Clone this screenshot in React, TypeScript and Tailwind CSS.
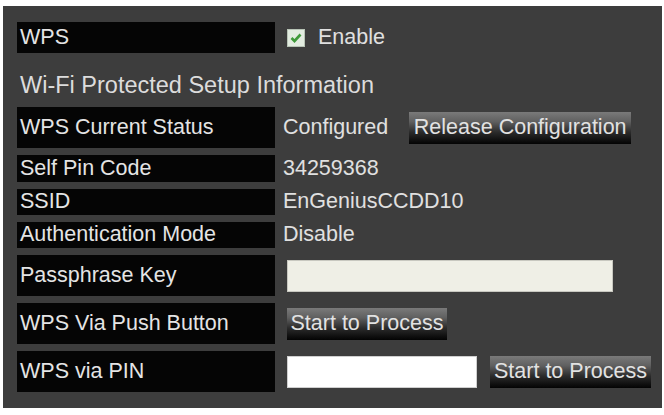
import React from 'react';

const font = { fontFamily: '"Liberation Sans", Arial, sans-serif' };

function Label({ text, h }: { text: string; h: string }) {
  return (
    <div
      className={`w-[258px] ${h} bg-[#050505] pl-[3px] flex items-center text-[21.5px] leading-none text-[#e4e4e4] shrink-0`}
    >
      {text}
    </div>
  );
}

function GlossButton({ text, w }: { text: string; w: string }) {
  return (
    <button
      className={`${w} h-[32px] bg-[linear-gradient(to_bottom,#7a7a7a_0%,#606060_30%,#2c2c2c_62%,#030303_100%)] text-[21.5px] leading-none text-[#e2e2e2] flex items-center justify-center shrink-0`}
    >
      {text}
    </button>
  );
}

export default function App() {
  return (
    <div className="w-[664px] h-[415px] bg-white pt-[6px] pl-[3px]" style={font}>
      <div className="w-[659px] h-[402px] bg-[#3d3d3d] pt-[16px] pl-[14px]">
        <div className="flex items-center h-[31px]">
          <Label text="WPS" h="h-[31px]" />
          <div className="ml-[12px] w-[18px] h-[18px] bg-[#e2ece0] border border-[#b8c4b6] flex items-center justify-center">
            <svg width="12" height="10" viewBox="0 0 12 10">
              <path d="M1.5 5 L4.5 8 L10.5 1.5" stroke="#3f9a3a" strokeWidth="2.6" fill="none" />
            </svg>
          </div>
          <span className="ml-[13px] text-[21.5px] leading-none text-[#e0e0e0]">Enable</span>
        </div>

        <div className="pt-[18px] pb-[8px] pl-[3px] text-[23.5px] leading-[28px] text-[#dcdcdc]">
          Wi-Fi Protected Setup Information
        </div>

        <div className="flex flex-col gap-[7px]">
          <div className="flex items-center">
            <Label text="WPS Current Status" h="h-[41px]" />
            <span className="ml-[8px] text-[21.5px] leading-none text-[#e0e0e0]">Configured</span>
            <div className="ml-[21px]">
              <GlossButton text="Release Configuration" w="w-[222px]" />
            </div>
          </div>

          <div className="flex items-center">
            <Label text="Self Pin Code" h="h-[27px]" />
            <span className="ml-[8px] text-[21.5px] leading-none text-[#e0e0e0]">34259368</span>
          </div>

          <div className="flex items-center">
            <Label text="SSID" h="h-[26px]" />
            <span className="ml-[8px] text-[21.5px] leading-none text-[#e0e0e0]">EnGeniusCCDD10</span>
          </div>

          <div className="flex items-center">
            <Label text="Authentication Mode" h="h-[26px]" />
            <span className="ml-[8px] text-[21.5px] leading-none text-[#e0e0e0]">Disable</span>
          </div>

          <div className="flex items-center">
            <Label text="Passphrase Key" h="h-[41px]" />
            <div className="ml-[12px] w-[326px] h-[32px] bg-[#efefe6] border border-[#c8c8c0]" />
          </div>

          <div className="flex items-center">
            <Label text="WPS Via Push Button" h="h-[41px]" />
            <div className="ml-[12px]">
              <GlossButton text="Start to Process" w="w-[160px]" />
            </div>
          </div>

          <div className="flex items-center">
            <Label text="WPS via PIN" h="h-[41px]" />
            <div className="ml-[12px] w-[190px] h-[32px] bg-white border border-[#cfcfcf]" />
            <div className="ml-[13px]">
              <GlossButton text="Start to Process" w="w-[161px]" />
            </div>
          </div>
        </div>
      </div>
    </div>
  );
}
